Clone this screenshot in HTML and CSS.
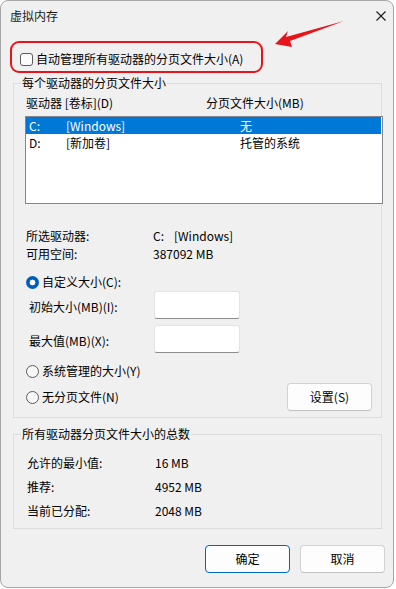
FILE: index.html
```html
<!DOCTYPE html>
<html lang="zh-CN">
<head>
<meta charset="utf-8">
<title>虚拟内存</title>
<link rel="stylesheet" href="styles.css">
</head>
<body>
<div class="window">
  <div class="titlebar">
    <span class="title">虚拟内存</span>
    <svg class="close" width="10" height="10" viewBox="0 0 10 10"><path d="M0.5 0.5 L9.5 9.5 M9.5 0.5 L0.5 9.5" stroke="#1a1a1a" stroke-width="1.1" fill="none"/></svg>
  </div>
  <div class="content">
    <div class="auto-row">
      <span class="checkbox"></span>
      <span>自动管理所有驱动器的分页文件大小(A)</span>
    </div>

    <fieldset class="group group-drives">
      <legend>每个驱动器的分页文件大小</legend>
      <div class="list-head">
        <span class="col-drive">驱动器 [卷标](D)</span>
        <span class="col-size">分页文件大小(MB)</span>
      </div>
      <div class="listbox">
        <div class="list-row selected"><span class="c1">C:</span><span class="c2">[Windows]</span><span class="c3">无</span></div>
        <div class="list-row"><span class="c1">D:</span><span class="c2">[新加卷]</span><span class="c3">托管的系统</span></div>
      </div>
      <div class="info">
        <div class="info-row"><span class="info-label">所选驱动器:</span><span class="drive-letter">C:</span><span>[Windows]</span></div>
        <div class="info-row"><span class="info-label">可用空间:</span><span>387092 MB</span></div>
      </div>
      <div class="radio-row first">
        <span class="radio checked"></span><span>自定义大小(C):</span>
      </div>
      <div class="field-row">
        <span class="field-label">初始大小(MB)(I):</span><span class="input"></span>
      </div>
      <div class="field-row second">
        <span class="field-label">最大值(MB)(X):</span><span class="input"></span>
      </div>
      <div class="radio-row sys">
        <span class="radio"></span><span>系统管理的大小(Y)</span>
      </div>
      <div class="radio-row none">
        <span class="radio"></span><span>无分页文件(N)</span>
        <button class="btn set-btn">设置(S)</button>
      </div>
    </fieldset>

    <fieldset class="group group-total">
      <legend>所有驱动器分页文件大小的总数</legend>
      <div class="total-row"><span class="total-label">允许的最小值:</span><span>16 MB</span></div>
      <div class="total-row"><span class="total-label">推荐:</span><span>4952 MB</span></div>
      <div class="total-row"><span class="total-label">当前已分配:</span><span>2048 MB</span></div>
    </fieldset>

    <div class="actions">
      <button class="btn primary">确定</button>
      <button class="btn">取消</button>
    </div>
  </div>

  <div class="highlight"></div>
  <svg class="arrow" width="80" height="36" viewBox="0 0 80 36">
    <polygon points="1,24 14,11 12,17 70,1 16,21 18,27" fill="#e8141b"/>
  </svg>
</div>
</body>
</html>
```

FILE: styles.css
```css
html, body {
  margin: 0;
  padding: 0;
  background: #ffffff;
}

body {
  font-family: "Noto Sans CJK SC", "Microsoft YaHei", sans-serif;
  font-size: 12px;
  color: #000;
}

.window {
  position: relative;
  width: 394px;
  height: 588px;
  box-sizing: border-box;
  background: #f0f0f0;
  border: 1px solid #a6a6a6;
  border-radius: 8px;
  overflow: hidden;
}

.titlebar {
  height: 29px;
  display: flex;
  align-items: center;
  padding-left: 9px;
  padding-right: 7px;
}

.title {
  flex: 1;
  line-height: 16px;
  color: #1a1a1a;
  margin-top: 1px;
}

.close {
  display: block;
  margin-top: 1px;
}

.content {
  padding: 0 11px 0 12px;
}

.auto-row {
  display: flex;
  align-items: center;
  height: 16px;
  line-height: 16px;
  margin-top: 21px;
  padding-left: 7px;
}

.checkbox {
  width: 13px;
  height: 13px;
  box-sizing: border-box;
  border: 1px solid #5c5c5c;
  border-radius: 3px;
  background: #fbfbfb;
  margin-right: 3px;
}

.group {
  margin: 0;
  padding: 0;
  border: 1px solid #dcdcdc;
  min-width: 0;
}

.group legend {
  margin-left: 7px;
  padding: 0 1px;
  line-height: 16px;
}

.group-drives {
  margin-top: 8px;
  padding-bottom: 6px;
}

.list-head {
  display: flex;
  height: 16px;
  line-height: 16px;
  margin-top: 4px;
  padding-left: 12px;
}

.col-drive {
  width: 180px;
}

.listbox {
  margin-top: 5px;
  margin-left: 11px;
  margin-right: -2px;
  height: 88px;
  box-sizing: border-box;
  border: 1px solid #82878f;
  background: #ffffff;
  padding-right: 1px;
}

.list-row {
  display: flex;
  height: 17px;
  line-height: 17px;
  padding-left: 3px;
}

.list-row.selected {
  background: #0078d7;
  color: #ffffff;
}

.c1 {
  width: 37px;
}

.c2 {
  width: 174px;
}

.info {
  margin-top: 23px;
  padding-left: 12px;
}

.info-row {
  display: flex;
  height: 18px;
  line-height: 18px;
}

.info-label {
  width: 127px;
}

.drive-letter {
  width: 21px;
}

.radio-row {
  display: flex;
  align-items: center;
  height: 18px;
  line-height: 18px;
  padding-left: 12px;
}

.radio-row.first {
  margin-top: 10px;
}

.radio-row.sys {
  margin-top: 9px;
}

.radio-row.none {
  height: 28px;
  margin-top: 3px;
}

.radio {
  width: 13px;
  height: 13px;
  box-sizing: border-box;
  border-radius: 50%;
  border: 1px solid #5c5c5c;
  background: #f7f7f7;
  margin-right: 3px;
  flex: none;
}

.radio.checked {
  border: none;
  background: radial-gradient(circle, #ffffff 0 2.6px, #005fb8 3.2px);
}

.field-row {
  display: flex;
  align-items: center;
  padding-left: 15px;
}

.field-row.second {
  margin-top: 6px;
}

.field-label {
  width: 125px;
  line-height: 18px;
  margin-top: 3px;
}

.input {
  width: 86px;
  height: 28px;
  box-sizing: border-box;
  background: #ffffff;
  border: 1px solid #e3e3e3;
  border-bottom-color: #8d8d8d;
  border-radius: 3px;
}

.btn {
  font-family: inherit;
  font-size: 12px;
  color: #000;
  height: 28px;
  width: 85px;
  box-sizing: border-box;
  background: #fdfdfd;
  border: 1px solid #d2d2d2;
  border-bottom-color: #c0c0c0;
  border-radius: 4px;
  padding: 0;
  line-height: 16px;
}

.set-btn {
  margin-left: auto;
  margin-right: 9px;
}

.group-total {
  margin-top: 8px;
  padding-bottom: 5px;
}

.total-row {
  display: flex;
  height: 24px;
  line-height: 24px;
  padding-left: 13px;
}

.total-row:first-of-type {
  margin-top: 9px;
}

.total-label {
  width: 128px;
}

.actions {
  display: flex;
  justify-content: flex-end;
  gap: 10px;
  margin-top: 16px;
  margin-right: -3px;
}

.btn.primary {
  border: 1px solid #0067c0;
}

.highlight {
  position: absolute;
  left: 9px;
  top: 40px;
  width: 253px;
  height: 32px;
  box-sizing: border-box;
  border: 2.5px solid #e8141b;
  border-radius: 9px;
}

.arrow {
  position: absolute;
  left: 273px;
  top: 19px;
}
```
